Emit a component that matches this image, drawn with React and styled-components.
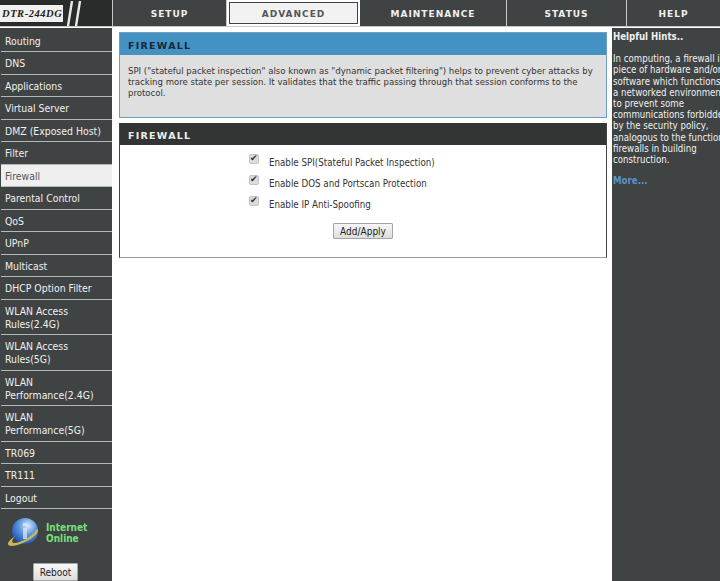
import React from "react";
import styled, { createGlobalStyle } from "styled-components";

const GlobalStyle = createGlobalStyle`
  html, body {
    margin: 0;
    padding: 0;
    height: 100%;
    overflow: hidden;
    background: #fff;
    font-family: "DejaVu Sans Condensed", "DejaVu Sans", Verdana, sans-serif;
    font-size: 9.5px;
  }
`;

const menu = [
  ["Routing"],
  ["DNS"],
  ["Applications"],
  ["Virtual Server"],
  ["DMZ (Exposed Host)"],
  ["Filter"],
  ["Firewall"],
  ["Parental Control"],
  ["QoS"],
  ["UPnP"],
  ["Multicast"],
  ["DHCP Option Filter"],
  ["WLAN Access", "Rules(2.4G)"],
  ["WLAN Access", "Rules(5G)"],
  ["WLAN", "Performance(2.4G)"],
  ["WLAN", "Performance(5G)"],
  ["TR069"],
  ["TR111"],
  ["Logout"],
];

const tabs = [
  { name: "SETUP", width: 114 },
  { name: "ADVANCED", width: 133, active: true },
  { name: "MAINTENANCE", width: 147 },
  { name: "STATUS", width: 120 },
  { name: "HELP", width: 93 },
];

const hints = [
  "In computing, a firewall is a",
  "piece of hardware and/or",
  "software which functions in",
  "a networked environment",
  "to prevent some",
  "communications forbidden",
  "by the security policy,",
  "analogous to the function of",
  "firewalls in building",
  "construction.",
];

const options = [
  "Enable SPI(Stateful Packet Inspection)",
  "Enable DOS and Portscan Protection",
  "Enable IP Anti-Spoofing",
];

const Page = styled.div`
  width: 720px;
  height: 581px;
  overflow: hidden;
  display: flex;
  flex-direction: column;
`;

const TopBar = styled.div`
  display: flex;
  height: 26px;
  flex: none;
  background: #404343;
  border-bottom: 1px solid #c9c9c9;
`;

const Logo = styled.div`
  width: 112px;
  flex: none;
  display: flex;
  align-items: center;
  background: #2a2c2c;
  border-right: 1px solid #c9c9c9;
  overflow: hidden;
`;

const ModelName = styled.div`
  width: 63px;
  height: 17px;
  line-height: 17px;
  flex: none;
  background: #f0f0f0;
  color: #222;
  padding-left: 2px;
  box-sizing: border-box;
  font-family: "Liberation Serif", serif;
  font-size: 10.5px;
  font-weight: bold;
  font-style: italic;
  letter-spacing: 0.55px;
  white-space: nowrap;
`;

const Tab = styled.div`
  width: ${(p) => p.$width}px;
  flex: none;
  box-sizing: border-box;
  display: flex;
  align-items: center;
  justify-content: center;
  padding-top: 1px;
  font-family: "DejaVu Sans", sans-serif;
  font-size: 9px;
  font-weight: bold;
  letter-spacing: 1px;
  color: ${(p) => (p.$active ? "#555" : "#f0f0f0")};
  background: ${(p) => (p.$active ? "#f2f2f2" : "#404343")};
  border-right: 1px solid #c9c9c9;
  border: ${(p) => (p.$active ? "2px solid #fff" : undefined)};
  outline: ${(p) => (p.$active ? "1px solid #404343" : "none")};
  outline-offset: -3px;
  &:last-child {
    border-right: none;
  }
`;

const Body = styled.div`
  flex: 1;
  display: grid;
  grid-template-columns: 113px 1fr 108px;
  background: #fff;
  min-height: 0;
`;

const Sidebar = styled.div`
  background: #404343;
  margin-right: 1px;
  padding-top: 1.5px;
  display: flex;
  flex-direction: column;
  border-top: 1px solid #fff;
`;

const MenuItem = styled.div`
  box-sizing: border-box;
  padding: 5px 0 0 4px;
  height: ${(p) => (p.$lines > 1 ? 35.5 : 22.5)}px;
  line-height: 13px;
  font-size: 10.4px;
  color: ${(p) => (p.$active ? "#555" : "#f0f0f0")};
  background: ${(p) => (p.$active ? "#efefef" : "transparent")};
  border-bottom: 1.5px solid #b5b7b7;
  margin-left: 1px;
`;

const StatusBox = styled.div`
  display: flex;
  align-items: center;
  gap: 4px;
  padding: 7px 0 0 6px;
`;

const StatusText = styled.div`
  color: #74e07a;
  font-weight: bold;
  line-height: 11px;
  font-size: 10px;
`;

const RebootRow = styled.div`
  display: flex;
  justify-content: center;
  padding-top: 13px;
  padding-right: 1px;
`;

const Button = styled.button`
  font-family: inherit;
  font-size: 10px;
  color: #222;
  height: ${(p) => (p.$small ? 18 : 16)}px;
  padding: 0 6px;
  background: linear-gradient(#f7f7f7, #dedede);
  border: 1px solid #a5a5a5;
  border-radius: 1px;
`;

const Main = styled.div`
  padding: 5px 5px 0 6px;
  display: flex;
  flex-direction: column;
  gap: 5px;
`;

const InfoPanel = styled.section`
  height: 86px;
  box-sizing: border-box;
  background: #dfdfdf;
  border: 1px solid #6f9fc0;
  color: #333;
`;

const PanelHead = styled.h2`
  margin: 0;
  height: 22px;
  line-height: 25px;
  padding-left: 8px;
  font-family: "DejaVu Sans", sans-serif;
  font-size: 9.5px;
  font-weight: bold;
  letter-spacing: 1.25px;
  background: ${(p) => p.$bg};
  color: ${(p) => p.$fg};
`;

const InfoText = styled.p`
  margin: 0;
  padding: 10px 8px 0;
  line-height: 11px;
  font-size: 9.5px;
`;

const FormPanel = styled.section`
  height: 135px;
  box-sizing: border-box;
  border: 1px solid #404343;
  border-top: none;
  border-bottom: 1px solid #9a9a9a;
  display: flex;
  flex-direction: column;
`;

const OptionList = styled.div`
  padding: 7px 0 0 129px;
  display: flex;
  flex-direction: column;
`;

const Option = styled.label`
  height: 21px;
  display: flex;
  align-items: center;
  color: #333;
  font-size: 9.7px;
`;

const Check = styled.input`
  appearance: none;
  position: relative;
  box-sizing: border-box;
  width: 10px;
  height: 10px;
  margin: -7px 10px 0 0;
  background: #dcdcdc;
  border: 1px solid #c4c4c4;
  border-radius: 2px;
  &:checked::after {
    content: "✔";
    position: absolute;
    left: 0;
    top: -2px;
    font-size: 9px;
    line-height: 11px;
    color: #333;
  }
`;

const ApplyRow = styled.div`
  display: flex;
  justify-content: center;
  padding: 8px 0 0 0;
`;

const Hints = styled.aside`
  background: #404343;
  color: #efefef;
  padding: 3px 0 0 1px;
  line-height: 11.2px;
  font-size: 9.6px;
  white-space: nowrap;
  overflow: hidden;
  border-top: 1px solid #fff;
`;

const HintsTitle = styled.div`
  font-weight: bold;
  margin-bottom: 11px;
`;

const MoreLink = styled.a`
  display: block;
  margin-top: 10px;
  color: #5b93c7;
  font-weight: bold;
`;

const Stripes = () => (
  <svg width="24" height="25" viewBox="0 0 24 25">
    <path d="M5 25 L9 0 M13 25 L17 0" stroke="#e8e8e8" strokeWidth="2.4" fill="none" />
  </svg>
);

const Globe = () => (
  <svg width="36" height="34" viewBox="0 0 36 34">
    <defs>
      <radialGradient id="ball" cx="0.6" cy="0.3" r="0.75">
        <stop offset="0" stopColor="#dbeafc" />
        <stop offset="0.45" stopColor="#5c97e0" />
        <stop offset="1" stopColor="#1c4aa5" />
      </radialGradient>
    </defs>
    <circle cx="19" cy="15" r="13" fill="url(#ball)" />
    <path d="M17 12h4v11h-4z M17 7h4v3h-4z" fill="#dfe9f7" opacity="0.7" />
    <path
      d="M31 13 C35 15 27 23 17 27 C8 31 1 31 2 27 C3 25 6 22 9 20 C6 24 5 27 8 27 C15 27 27 20 31 13Z"
      fill="#c9b65a"
    />
  </svg>
);

const App = () => (
  <Page>
    <GlobalStyle />
    <TopBar>
      <Logo>
        <ModelName>DTR-244DG</ModelName>
        <Stripes />
      </Logo>
      {tabs.map((t) => (
        <Tab key={t.name} $width={t.width} $active={t.active}>
          {t.name}
        </Tab>
      ))}
    </TopBar>
    <Body>
      <Sidebar>
        {menu.map((lines) => (
          <MenuItem key={lines.join()} $lines={lines.length} $active={lines[0] === "Firewall"}>
            {lines.map((l) => (
              <div key={l}>{l}</div>
            ))}
          </MenuItem>
        ))}
        <StatusBox>
          <Globe />
          <StatusText>
            Internet
            <br />
            Online
          </StatusText>
        </StatusBox>
        <RebootRow>
          <Button $small>Reboot</Button>
        </RebootRow>
      </Sidebar>
      <Main>
        <InfoPanel>
          <PanelHead $bg="#4492c2" $fg="#14283a">FIREWALL</PanelHead>
          <InfoText>
            SPI ("stateful packet inspection" also known as "dynamic packet filtering") helps to prevent cyber attacks by
            tracking more state per session. It validates that the traffic passing through that session conforms to the
            protocol.
          </InfoText>
        </InfoPanel>
        <FormPanel>
          <PanelHead $bg="#333434" $fg="#eee">FIREWALL</PanelHead>
          <OptionList>
            {options.map((o) => (
              <Option key={o}>
                <Check type="checkbox" defaultChecked />
                {o}
              </Option>
            ))}
          </OptionList>
          <ApplyRow>
            <Button>Add/Apply</Button>
          </ApplyRow>
        </FormPanel>
      </Main>
      <Hints>
        <HintsTitle>Helpful Hints..</HintsTitle>
        {hints.map((h) => (
          <div key={h}>{h}</div>
        ))}
        <MoreLink>More...</MoreLink>
      </Hints>
    </Body>
  </Page>
);

export default App;
